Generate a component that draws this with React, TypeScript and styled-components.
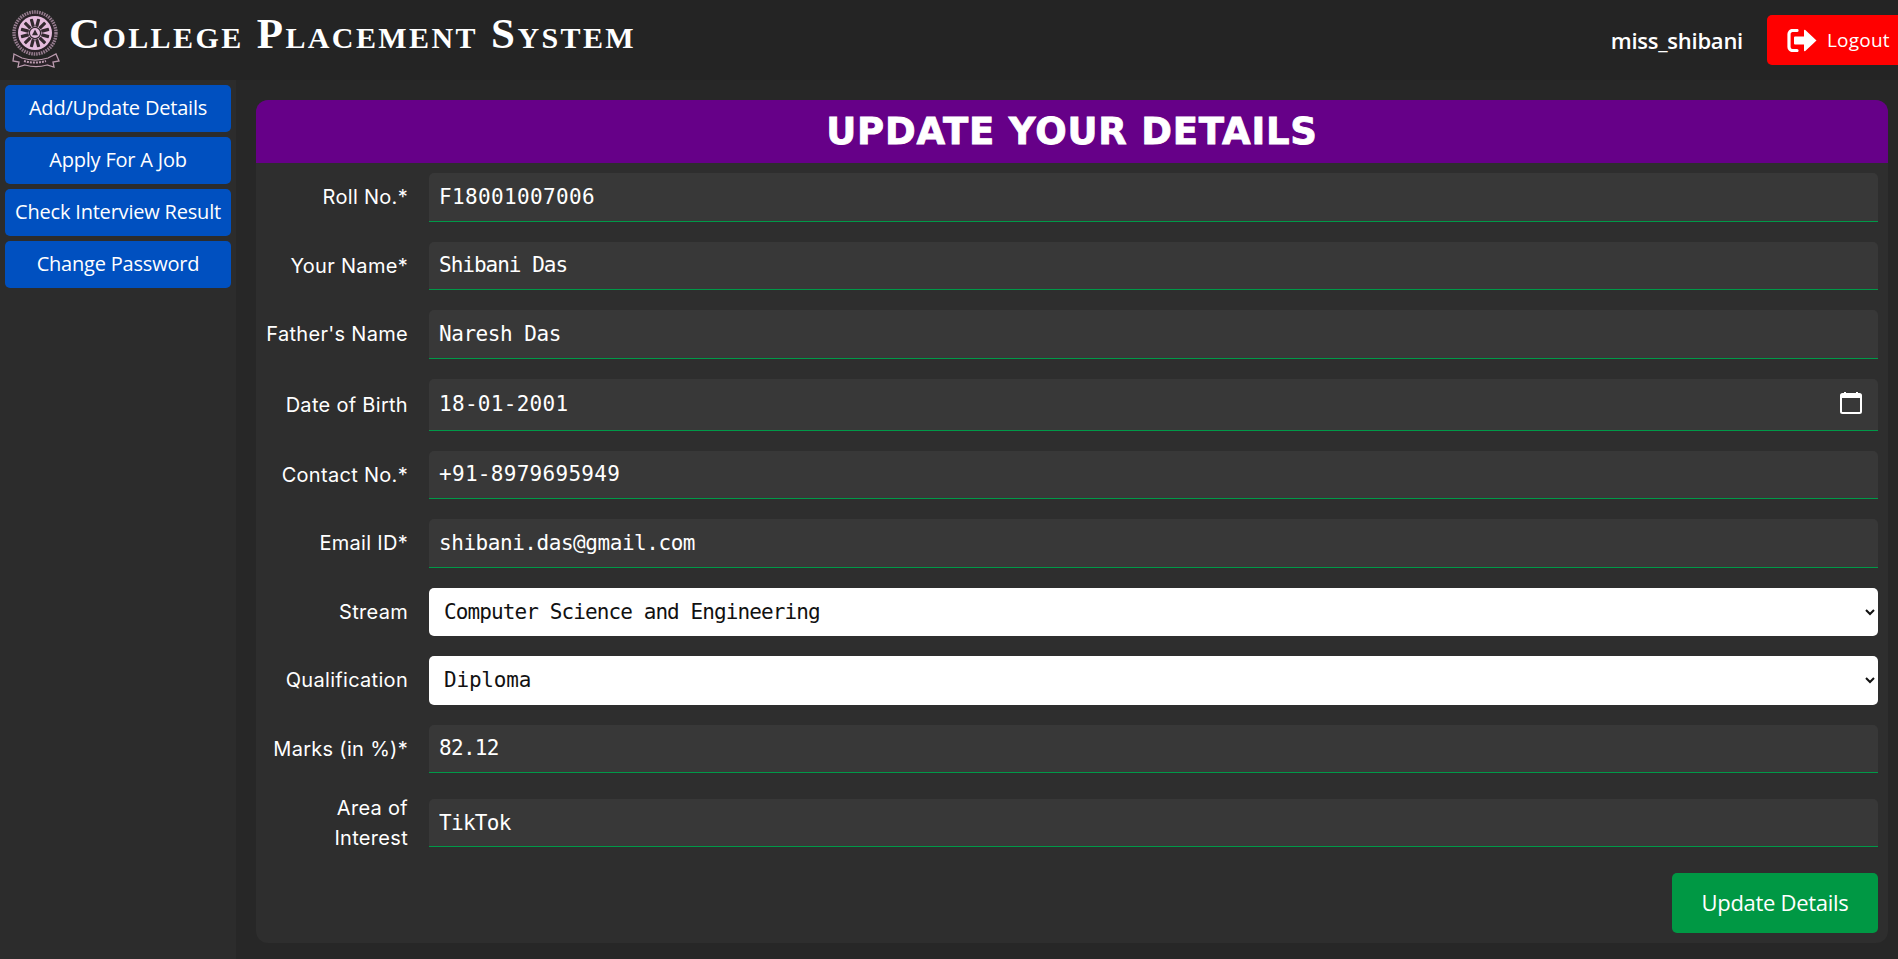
import React from "react";
import styled, { createGlobalStyle } from "styled-components";

const Global = createGlobalStyle`
  html, body { margin: 0; padding: 0; background: #272727; }
  * { box-sizing: border-box; }
`;

const Page = styled.div`
  width: 1898px;
  height: 959px;
  overflow: hidden;
  display: flex;
  flex-direction: column;
  background: #272727;
`;

const Header = styled.header`
  height: 80px;
  flex: none;
  display: flex;
  align-items: center;
  background: #242424;
  padding-left: 10px;
`;

const Brand = styled.h1`
  margin: 0 0 14px 9px;
  font-family: "Liberation Serif", serif;
  font-variant: small-caps;
  font-weight: 700;
  font-size: 43px;
  letter-spacing: 2.4px;
  color: #fff;
  white-space: nowrap;
`;

const HeaderRight = styled.div`
  margin-left: auto;
  display: flex;
  align-items: center;
`;

const UserName = styled.span`
  font-family: "Open Sans", sans-serif;
  font-weight: 600;
  font-size: 22px;
  letter-spacing: -0.25px;
  color: #fff;
  margin-right: 24px;
`;

const LogoutButton = styled.button`
  width: 131px;
  height: 50px;
  border: 0;
  border-radius: 5px 0 0 5px;
  background: #ff0000;
  color: #fff;
  font-family: "Open Sans", sans-serif;
  font-size: 19px;
  letter-spacing: 0.2px;
  display: flex;
  align-items: center;
  gap: 10px;
  padding: 0 0 0 20px;
  white-space: nowrap;
`;

const Body = styled.div`
  flex: 1;
  display: flex;
  min-height: 0;
`;

const Sidebar = styled.nav`
  width: 236px;
  flex: none;
  background: #2c2c2c;
  padding: 5px 5px 0;
  display: flex;
  flex-direction: column;
  gap: 5px;
`;

const NavButton = styled.button`
  width: 226px;
  height: 47px;
  border: 0;
  border-radius: 5px;
  background: #0050c0;
  color: #fff;
  font-family: "Open Sans", sans-serif;
  font-size: 20px;
  letter-spacing: -0.2px;
  padding: 0 0 2px;
  white-space: nowrap;
`;

const Main = styled.main`
  flex: 1;
  padding: 20px 10px 16px 20px;
`;

const Card = styled.section`
  background: #2e2e2e;
  border-radius: 12px;
  overflow: hidden;
`;

const CardTitle = styled.h2`
  margin: 0;
  height: 63px;
  display: flex;
  align-items: center;
  justify-content: center;
  background: #660088;
  color: #fff;
  font-family: "DejaVu Sans", sans-serif;
  font-weight: 700;
  font-size: 37px;
  letter-spacing: 0.8px;
  -webkit-text-stroke: 0.8px #fff;
`;

const Form = styled.form`
  padding: 10px 10px 10px 0;
  display: flex;
  flex-direction: column;
  gap: 20px;
`;

const Row = styled.div<{ $height?: number }>`
  display: flex;
  align-items: center;
  height: ${(p) => p.$height ?? 48.5}px;
`;

const Label = styled.label`
  width: 152px;
  flex: none;
  margin-right: 21px;
  text-align: right;
  font-family: "Inter", sans-serif;
  font-size: 20px;
  letter-spacing: 0.3px;
  line-height: 30px;
  color: #fff;
  white-space: nowrap;
`;

const FieldWrap = styled.div<{ $height?: number }>`
  position: relative;
  flex: 1;
  height: ${(p) => p.$height ?? 48.5}px;
`;

const TextField = styled.input<{ $track?: number }>`
  width: 100%;
  height: 100%;
  display: block;
  border: 0;
  border-bottom: 1px solid #009948;
  border-radius: 5px 5px 0 0;
  outline: 0;
  background: #383838;
  color: #fff;
  padding: 0 10px;
  font-family: "DejaVu Sans Mono", monospace;
  font-size: 21px;
  letter-spacing: ${(p) => p.$track ?? 0}px;
`;

const SelectField = styled.select<{ $track?: number }>`
  width: 100%;
  height: 100%;
  display: block;
  border: 0;
  border-radius: 5px;
  outline: 0;
  background-color: #fff;
  color: #111;
  padding: 0 11px;
  font-family: "DejaVu Sans Mono", monospace;
  font-size: 21px;
  letter-spacing: ${(p) => p.$track ?? 0}px;
`;

const CalendarMark = styled.svg`
  position: absolute;
  right: 16px;
  top: 12px;
  width: 22px;
  height: 24px;
`;

const Actions = styled.div`
  display: flex;
  justify-content: flex-end;
`;

const SubmitButton = styled.button`
  width: 206px;
  height: 60px;
  border: 0;
  border-radius: 5px;
  background: #009844;
  color: #fff;
  font-family: "Open Sans", sans-serif;
  font-size: 22px;
  letter-spacing: -0.3px;
  padding: 0 0 3px;
`;

const Emblem = () => {
  const spokes = Array.from({ length: 12 }, (_, i) => (i * 360) / 12);
  return (
    <svg width="50" height="60" viewBox="0 0 50 60" aria-hidden="true">
      <circle cx="25" cy="23" r="21" fill="#2a2228" stroke="#947b8d" strokeWidth="3.4" strokeDasharray="1.6 0.9" />
      <circle cx="25" cy="23" r="17" fill="#e5bcdd" />
      {spokes.map((a) => (
        <rect key={a} x="23.4" y="8.5" width="3.2" height="8" rx="0.6" fill="#33292f" transform={`rotate(${a + 15} 25 23)`} />
      ))}
      <circle cx="25" cy="23" r="5.6" fill="#e5bcdd" stroke="#33292f" strokeWidth="1.2" />
      <path d="M25 19.6l3 5.6h-6z" fill="#33292f" />
      <path d="M4 44l8 4c8 2.6 18 2.6 26 0l8-4 3 7-6 1 1 5-7-2c-7 2-15 2-22 0l-7 2 1-5-6-1z" fill="#2a2228" stroke="#b99aad" strokeWidth="1.3" />
      <path d="M14 51c7 2 15 2 22 0" fill="none" stroke="#b99aad" strokeWidth="2" strokeDasharray="2 1" />
    </svg>
  );
};

const LogoutIcon = () => (
  <svg width="30" height="23" viewBox="0 0 30 23" aria-hidden="true">
    <path d="M10 1.5H5.5A3.5 3.5 0 0 0 2 5v13a3.5 3.5 0 0 0 3.5 3.5H10" fill="none" stroke="#fff" strokeWidth="3.2" strokeLinecap="round" />
    <path d="M8 7.5h9V1.5c0-.8.8-1 1.3-.5L29.5 11.5 18.3 22c-.5.5-1.3.3-1.3-.5V15.5H8a1 1 0 0 1-1-1v-6a1 1 0 0 1 1-1z" fill="#fff" />
  </svg>
);

type Field = { label: string; value: string; track?: number };

const fieldsBefore: Field[] = [
  { label: "Roll No.*", value: "F18001007006", track: 0.35 },
  { label: "Your Name*", value: "Shibani Das", track: -1 },
  { label: "Father's Name", value: "Naresh Das", track: -0.45 },
];
const fieldsAfter: Field[] = [
  { label: "Contact No.*", value: "+91-8979695949", track: 0.3 },
  { label: "Email ID*", value: "shibani.das@gmail.com", track: -0.45 },
];

const nav = ["Add/Update Details", "Apply For A Job", "Check Interview Result", "Change Password"];

const TextRow = ({ label, value, track }: Field) => (
  <Row>
    <Label>{label}</Label>
    <FieldWrap>
      <TextField readOnly value={value} $track={track} />
    </FieldWrap>
  </Row>
);

const SelectRow = ({ label, value, track }: Field) => (
  <Row>
    <Label>{label}</Label>
    <FieldWrap>
      <SelectField value={value} onChange={() => undefined} $track={track}>
        <option>{value}</option>
      </SelectField>
    </FieldWrap>
  </Row>
);

export default function App() {
  return (
    <Page>
      <Global />
      <Header>
        <Emblem />
        <Brand>College Placement System</Brand>
        <HeaderRight>
          <UserName>miss_shibani</UserName>
          <LogoutButton type="button">
            <LogoutIcon />
            Logout
          </LogoutButton>
        </HeaderRight>
      </Header>
      <Body>
        <Sidebar>
          {nav.map((n) => (
            <NavButton key={n} type="button">
              {n}
            </NavButton>
          ))}
        </Sidebar>
        <Main>
          <Card>
            <CardTitle>UPDATE YOUR DETAILS</CardTitle>
            <Form>
              {fieldsBefore.map((f) => (
                <TextRow key={f.label} {...f} />
              ))}
              <Row $height={52}>
                <Label>Date of Birth</Label>
                <FieldWrap $height={52}>
                  <TextField readOnly value="18-01-2001" $track={0.3} />
                  <CalendarMark viewBox="0 0 22 24" aria-hidden="true">
                    <path d="M5 1v3M17 1v3" stroke="#fff" strokeWidth="2" />
                    <rect x="1" y="3" width="20" height="19" rx="1.5" fill="none" stroke="#fff" strokeWidth="2" />
                    <rect x="1" y="3" width="20" height="4" fill="#fff" />
                  </CalendarMark>
                </FieldWrap>
              </Row>
              {fieldsAfter.map((f) => (
                <TextRow key={f.label} {...f} />
              ))}
              <SelectRow label="Stream" value="Computer Science and Engineering" track={-0.9} />
              <SelectRow label="Qualification" value="Diploma" track={-0.2} />
              <TextRow label="Marks (in %)*" value="82.12" track={-0.7} />
              <Row $height={60}>
                <Label>
                  Area of
                  <br />
                  Interest
                </Label>
                <FieldWrap>
                  <TextField readOnly value="TikTok" $track={-0.7} />
                </FieldWrap>
              </Row>
              <Actions>
                <SubmitButton type="button">Update Details</SubmitButton>
              </Actions>
            </Form>
          </Card>
        </Main>
      </Body>
    </Page>
  );
}
